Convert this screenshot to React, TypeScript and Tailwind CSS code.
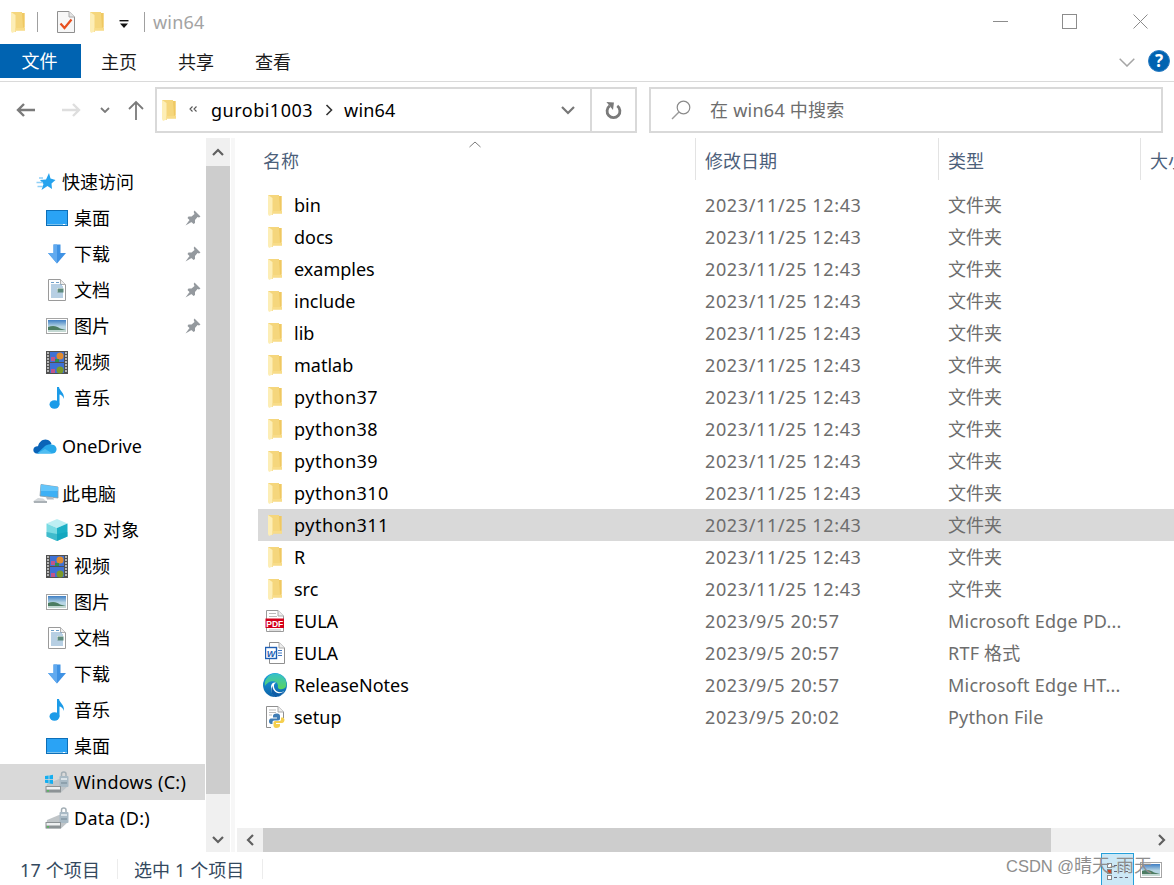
import React from "react";

type IP = { className?: string };

const Folder = ({ className = "" }: IP) => (
  <svg viewBox="0 0 14 21" className={`w-[14px] h-[21px] shrink-0 ${className}`}>
    <path d="M0 0 H11 V1 H13.5 V17 H14 V18.5 H5 V20 L0 19 Z" fill="#f5d67c" />
    <path d="M11 1 H13.5 V15.5 H12 Z" fill="#efc862" />
    <path d="M0 0 L4.5 3 V19.5 L1 21 L0 19 Z" fill="#fdeeb6" />
    <path d="M4.5 16 H14 V18.5 H4.5 Z" fill="#f8dc88" />
  </svg>
);

const Desktop = () => (
  <svg viewBox="0 0 22 16" className="w-[22px] h-[16px] shrink-0">
    <rect x="0" y="0" width="22" height="16" fill="#0d6fb8" />
    <rect x="1" y="1" width="20" height="13" fill="#2aa3f5" />
    <rect x="1" y="14" width="20" height="1" fill="#7cc4ef" />
    <rect x="17" y="14" width="2" height="1" fill="#fff" />
  </svg>
);

const Download = () => (
  <svg viewBox="0 0 20 20" className="w-[20px] h-[20px] shrink-0">
    <path d="M6.5 0.5 H13.5 V9 H19 L10 19.5 L1 9 H6.5 Z" fill="#3f92e4" />
    <path d="M6.5 0.5 H10 V19.5 L1 9 H6.5 Z" fill="#62aaef" />
  </svg>
);

const Doc = () => (
  <svg viewBox="0 0 18 22" className="w-[18px] h-[22px] shrink-0">
    <path d="M0.5 0.5 H12.5 L17.5 5.5 V21.5 H0.5 Z" fill="#fff" stroke="#9a9a9a" />
    <path d="M12.5 0.5 V5.5 H17.5" fill="#eee" stroke="#b0b0b0" />
    <path d="M3 3.5 H6 M8 3.5 H11 M3 6 H14 M3 8 H15 M3 10 H9 M3 12 H9 M3 14 H15 M3 16 H15 M3 18 H15" stroke="#6f9fc8" strokeWidth="1" />
    <rect x="9.5" y="9.5" width="6" height="4" fill="#5d8a7d" />
  </svg>
);

const Picture = () => (
  <svg viewBox="0 0 22 16" className="w-[22px] h-[16px] shrink-0">
    <rect x="0.5" y="0.5" width="21" height="15" fill="#fff" stroke="#a5a5a5" />
    <defs>
      <linearGradient id="sky" x1="0" y1="0" x2="0" y2="1">
        <stop offset="0" stopColor="#3f7fc4" />
        <stop offset="0.55" stopColor="#b8d6e4" />
      </linearGradient>
    </defs>
    <rect x="2" y="2" width="18" height="12" fill="url(#sky)" />
    <path d="M2 9 C7 7 11 8 14 10.5 L20 12 V14 H2 Z" fill="#4d7d62" />
    <path d="M2 12 H20 V14 H2 Z" fill="#c3d8d2" />
  </svg>
);

const Video = () => (
  <svg viewBox="0 0 22 23" className="w-[22px] h-[23px] shrink-0">
    <rect width="22" height="23" fill="#505050" />
    <path d="M1 2 H3 M1 5 H3 M1 8 H3 M1 11 H3 M1 14 H3 M1 17 H3 M1 20 H3 M19 2 H21 M19 5 H21 M19 8 H21 M19 11 H21 M19 14 H21 M19 17 H21 M19 20 H21" stroke="#d8d8d8" strokeWidth="1.5" />
    <rect x="4" y="1" width="14" height="10" fill="#3f71d4" />
    <rect x="4" y="12" width="14" height="10" fill="#3f71d4" />
    <circle cx="14" cy="5" r="3.5" fill="#e08a2e" />
    <rect x="5" y="6" width="4" height="4" fill="#c0558a" />
    <circle cx="14" cy="19" r="3.5" fill="#7b9a2a" />
    <rect x="9" y="8" width="4" height="3" fill="#2f8f4e" />
    <rect x="5" y="18" width="4" height="4" fill="#c0558a" />
  </svg>
);

const Music = () => (
  <svg viewBox="0 0 16 22" className="w-[16px] h-[22px] shrink-0">
    <ellipse cx="5.5" cy="17.5" rx="5" ry="4.2" fill="#1b9be8" />
    <path d="M8 0 H10 C10.5 4 15.5 5 15 12 C14 9 12 7.5 10.5 7.5 V17.5 H8 Z" fill="#1b9be8" />
  </svg>
);

const Cloud = () => (
  <svg viewBox="0 0 24 16" className="w-[24px] h-[16px] shrink-0 ml-[-2px]">
    <path d="M4 15.5 C1 15.5 0 13 0.5 11 C1 9 3 8 5 8.3 C6 3 11 0 15 2 C17 3 18 4 18.5 6 L10 11 L6 15.5 Z" fill="#0a64b8" />
    <path d="M4 15.5 L11 9 C13 7 16 6 18.5 6.5 C22 6.5 24 9.5 23.5 12 C23 14.5 21.5 15.5 19.5 15.5 Z" fill="#28a8ea" />
    <path d="M4 15.5 H19.5 L12 11 Z" fill="#50bdf2" />
  </svg>
);

const PC = () => (
  <svg viewBox="0 0 26 20" className="w-[26px] h-[20px] shrink-0">
    <path d="M8 0.5 L25 3 V14 L7 12 Z" fill="#3db0f5" stroke="#8a9aa5" strokeWidth="0.8" />
    <path d="M8 0.5 L25 3 V7 L7.5 7 Z" fill="#64c5fa" />
    <path d="M13 13 H20 L21 15.5 H14 Z" fill="#b5bcc2" />
    <path d="M5 14 L10 14.5 L13 17 L0.5 17 Z" fill="#d3d7da" />
    <path d="M0.5 17 H14 L14 19 H1 Z" fill="#aab1b6" />
  </svg>
);

const Cube = () => (
  <svg viewBox="0 0 22 22" className="w-[22px] h-[22px] shrink-0">
    <path d="M11 0 L21.5 4.5 L11 9 L0.5 4.5 Z" fill="#bdeff3" />
    <path d="M0.5 4.5 L11 9 V22 L0.5 17.5 Z" fill="#7adbe3" />
    <path d="M11 9 L21.5 4.5 V17.5 L11 22 Z" fill="#1bb0c6" />
    <path d="M0.5 13 L11 15 L21.5 13 V17.5 L11 22 L0.5 17.5 Z" fill="#0fa0ba" opacity="0.55" />
  </svg>
);

const Drive = ({ win }: { win?: boolean }) => (
  <svg viewBox="0 0 24 22" className="w-[24px] h-[22px] shrink-0">
    <path d="M16.5 5 V3 C16.5 0.3 21 0.3 21 3 V5" fill="none" stroke="#a3aeb5" strokeWidth="1.5" />
    <path d="M2 13 L14 8 H23 V15 L16 21.5 H1 Z" fill="#c0c5c8" />
    <rect x="14.5" y="5" width="9" height="11" rx="1" fill="#a9bac5" />
    <rect x="16" y="7" width="6" height="2" fill="#dbe3e8" />
    <rect x="16" y="11" width="6" height="2" fill="#8ea1ad" />
    <path d="M0.5 15 H16 V21.5 H0.5 Z" fill="#8c9295" />
    <rect x="1.5" y="16" width="13.5" height="2.5" fill="#eef0f1" />
    <rect x="2" y="19.3" width="2" height="1.2" fill="#45c44b" />
    {win && (
      <g fill="#14aef0">
        <path d="M0 5 L3.6 4.5 V8 H0 Z" />
        <path d="M4.4 4.4 L8 3.8 V8 H4.4 Z" />
        <path d="M0 8.8 H3.6 V12.3 L0 11.8 Z" />
        <path d="M4.4 8.8 H8 V13 L4.4 12.4 Z" />
      </g>
    )}
  </svg>
);

const Star = () => (
  <svg viewBox="0 0 20 20" className="w-[20px] h-[20px] shrink-0">
    <path d="M13 1 L14.5 6.5 L19.5 8 L15.5 11.5 L16 17 L11.5 14 L5.5 18 L7.5 12 L4 8 L10 7.5 Z" fill="#25a3ee" />
    <path d="M3 6 H7 M0.5 10.5 H7 M1.5 14.5 H7" stroke="#8fd0f7" strokeWidth="1.4" />
  </svg>
);

const Pin = () => (
  <svg viewBox="0 0 16 16" className="w-[16px] h-[16px] shrink-0">
    <path d="M9.5 0.5 L15.5 6.5 L14 7.5 L12.5 7 L10 10 L10 13 L8.5 14 L2.5 8 L3.5 6.5 L6.5 6.5 L9.5 4 L8.7 2 Z M4.5 10 L6.5 12 L0.5 15.5 Z" fill="#94999e" />
  </svg>
);

const Pdf = () => (
  <svg viewBox="0 0 20 22" className="w-[20px] h-[22px] shrink-0">
    <path d="M1.5 0.5 H13 L18.5 6 V21.5 H1.5 Z" fill="#fff" stroke="#9a9a9a" />
    <path d="M13 0.5 V6 H18.5" fill="#eee" stroke="#aaa" />
    <path d="M4 3.5 H11 M4 6.5 H12 M4 20 H16" stroke="#bbb" />
    <rect x="0.5" y="8.5" width="18.5" height="9.5" fill="#d4001a" />
    <text x="9.8" y="16.6" fontSize="8.5" fontWeight="700" fill="#fff" textAnchor="middle" fontFamily="Liberation Sans, sans-serif">PDF</text>
  </svg>
);

const Word = () => (
  <svg viewBox="0 0 20 22" className="w-[20px] h-[22px] shrink-0">
    <path d="M4.5 0.5 H14 L19.5 6 V21.5 H4.5 Z" fill="#fff" stroke="#8f8f8f" />
    <path d="M14 0.5 V6 H19.5" fill="#eee" stroke="#aaa" />
    <path d="M13 8.5 H17 M13 11 H17 M13 13.5 H17" stroke="#3f77c0" />
    <rect x="0.5" y="5.5" width="11" height="11" fill="#fff" stroke="#1f5fb4" strokeWidth="1.4" />
    <text x="6" y="14.6" fontSize="9" fontWeight="700" fontStyle="italic" fill="#1f5fb4" textAnchor="middle" fontFamily="Liberation Sans, sans-serif">W</text>
  </svg>
);

const Edge = () => (
  <svg viewBox="0 0 24 24" className="w-[24px] h-[24px] shrink-0">
    <defs>
      <linearGradient id="eg" x1="0.8" y1="0" x2="0.8" y2="1">
        <stop offset="0" stopColor="#35c1c9" />
        <stop offset="1" stopColor="#5ad45d" />
      </linearGradient>
      <linearGradient id="eb" x1="0" y1="0" x2="0" y2="1">
        <stop offset="0" stopColor="#1a9fe0" />
        <stop offset="1" stopColor="#0c62a8" />
      </linearGradient>
    </defs>
    <circle cx="12" cy="12" r="12" fill="url(#eb)" />
    <path d="M4 5 C7 0 17 -2 22 6 C24 10 24 14 21 15.5 C18 17 14 16 15 13 C15 9 11 7.5 7.5 8.5 C5 9.5 3 11 2 13 C1.5 10 2 7 4 5 Z" fill="url(#eg)" />
    <path d="M8 14 C8 10.5 11 9 13 9.8 C10.5 10.5 10.5 14 12 16.5 C14 19.5 18 20 21 18 C19 22 15 24 12 24 C9 22 8 18 8 14 Z" fill="#fff" />
    <path d="M9.5 13 C9.5 16.5 12 20 16 20.2 C18 20.3 20 19.3 21.5 17.5 C19.5 22 15.5 24 12 24 C8 22.5 7.5 16 9.5 13 Z" fill="#0e5da6" />
  </svg>
);

const Py = () => (
  <svg viewBox="0 0 20 22" className="w-[20px] h-[22px] shrink-0">
    <path d="M1.5 21.5 V0.5 H13 L18.5 6 V12" fill="#fff" stroke="#8f8f8f" />
    <path d="M1.5 21.5 H6" fill="none" stroke="#8f8f8f" />
    <path d="M13 0.5 V6 H18.5" fill="#eee" stroke="#aaa" />
    <path d="M4 4 H11 M4 6.5 H11 M4 9 H7" stroke="#bbb" />
    <path d="M12 7.5 C9 7.5 8 8.5 8 10 V11.5 H12 V12.5 H6 C4.5 12.5 4 14 4 15.5 C4 17 5 18 6 18 H7.5 V16 C7.5 15 8.5 14.5 9.5 14.5 H13 C14.5 14.5 15 13.5 15 12.5 V10 C15 8.5 14 7.5 12 7.5 Z" fill="#3f7cb4" />
    <path d="M11 22 C14 22 15 21 15 19.5 V18 H11 V17 H17 C18.5 17 19.5 15.5 19.5 14 C19.5 12.5 18.5 11.5 17.5 11.5 H16 V13.5 C16 14.5 15 15 14 15 H10.5 C9 15 8.5 16 8.5 17 V19.5 C8.5 21 9.5 22 11 22 Z" fill="#f5cf4e" />
  </svg>
);

const nav1: [React.ReactNode, string, boolean][] = [
  [<Desktop />, "桌面", true],
  [<Download />, "下载", true],
  [<Doc />, "文档", true],
  [<Picture />, "图片", true],
  [<Video />, "视频", false],
  [<Music />, "音乐", false],
];

const nav2: [React.ReactNode, string][] = [
  [<Cube />, "3D 对象"],
  [<Video />, "视频"],
  [<Picture />, "图片"],
  [<Doc />, "文档"],
  [<Download />, "下载"],
  [<Music />, "音乐"],
  [<Desktop />, "桌面"],
];

const folders = ["bin", "docs", "examples", "include", "lib", "matlab", "python37", "python38", "python39", "python310", "python311", "R", "src"];
const files: [React.ReactNode, string, string, string][] = [
  [<Pdf />, "EULA", "2023/9/5 20:57", "Microsoft Edge PD..."],
  [<Word />, "EULA", "2023/9/5 20:57", "RTF 格式"],
  [<Edge />, "ReleaseNotes", "2023/9/5 20:57", "Microsoft Edge HT..."],
  [<Py />, "setup", "2023/9/5 20:02", "Python File"],
];

const NavRow = ({ icon, label, pin, selected, wide }: { icon: React.ReactNode; label: string; pin?: boolean; selected?: boolean; wide?: boolean }) => (
  <div className={`h-[36px] flex items-center ${selected ? "bg-[#d9d9d9]" : ""}`}>
    <div className="w-[74px] pl-[46px] pr-[6px] flex justify-center shrink-0 h-[24px] items-center">{icon}</div>
    <span className={`flex-1 text-black whitespace-nowrap ${wide ? "tracking-[0.3px]" : ""}`}>{label}</span>
    {pin && <div className="mr-[4px] mt-[-1px]"><Pin /></div>}
  </div>
);

const NavHead = ({ icon, label }: { icon: React.ReactNode; label: string }) => (
  <div className="h-[36px] flex items-center">
    <div className="w-[62px] pl-[32px] pr-[2px] flex justify-center shrink-0">{icon}</div>
    <span className="text-black whitespace-nowrap">{label}</span>
  </div>
);

const FileRow = ({ icon, name, date, type, selected, digits, latin }: { icon: React.ReactNode; name: string; date: string; type: string; selected?: boolean; digits?: boolean; latin?: boolean }) => (
  <div className={`h-[32px] flex items-center whitespace-nowrap ${selected ? "bg-[#d9d9d9]" : ""}`}>
    <div className="w-[36px] flex justify-center pr-[2px] shrink-0">{icon}</div>
    <span className={`w-[411px] text-black shrink-0 ${digits ? "tracking-[0.5px]" : ""}`}>{name}</span>
    <span className="w-[243px] text-[#6d6d6d] shrink-0 tracking-[0.63px]">{date}</span>
    <span className={`text-[#6d6d6d] ${latin ? "tracking-[0.22px]" : ""}`}>{type}</span>
  </div>
);

export default function App() {
  return (
    <div className="relative w-[1174px] h-[885px] overflow-hidden bg-white flex flex-col text-[18px] leading-[24px] font-['Noto_Sans','Noto_Sans_CJK_SC',sans-serif]">
      {/* title bar */}
      <div className="h-[44px] flex items-center shrink-0">
        <div className="ml-[11px]"><Folder /></div>
        <div className="ml-[12px] w-px h-[20px] bg-[#a0a0a0]" />
        <svg viewBox="0 0 18 22" className="ml-[19px] w-[18px] h-[22px] shrink-0">
          <path d="M0.5 0.5 H12 L17.5 6 V21.5 H0.5 Z" fill="#f7f7f7" stroke="#8f8f8f" />
          <path d="M12 0.5 V6 H17.5" fill="#e5e5e5" stroke="#aaa" />
          <path d="M3.5 12.5 L7.5 17 L14.5 8.5" fill="none" stroke="#e8501f" strokeWidth="2.2" />
        </svg>
        <div className="ml-[15px]"><Folder /></div>
        <svg viewBox="0 0 10 9" className="ml-[15px] mt-[5px] w-[10px] h-[9px] shrink-0">
          <rect x="0.5" y="0" width="9" height="1.4" fill="#111" />
          <path d="M1 3.5 H9 L5 8 Z" fill="#111" />
        </svg>
        <div className="ml-[15px] w-px h-[20px] bg-[#a0a0a0]" />
        <span className="ml-[8px] text-[#a3a3a3] mt-[-1px] tracking-[0.2px]">win64</span>
        <div className="ml-auto flex items-center mb-[2px]">
          <div className="w-[15px] h-px bg-[#8c8c8c]" />
          <div className="ml-[54px] w-[15px] h-[15px] border border-[#8c8c8c]" />
          <svg viewBox="0 0 15 15" className="ml-[56px] mr-[26px] w-[15px] h-[15px] shrink-0">
            <path d="M0.5 0.5 L14.5 14.5 M14.5 0.5 L0.5 14.5" stroke="#8c8c8c" strokeWidth="1" />
          </svg>
        </div>
      </div>

      {/* ribbon */}
      <div className="h-[38px] flex shrink-0 border-b border-[#dadada] relative">
        <div className="w-[81px] h-[34px] pr-[2px] bg-[#0063b1] text-white flex items-center justify-center">文件</div>
        <div className="h-[34px] pt-[1px] flex items-center ml-[20px] gap-[41px] text-[#1a1a1a]">
          <span>主页</span>
          <span>共享</span>
          <span>查看</span>
        </div>
        <div className="ml-auto h-[34px] flex items-center">
          <svg viewBox="0 0 16 9" className="w-[16px] h-[9px] mt-[2px] shrink-0">
            <path d="M0.7 0.7 L8 8 L15.3 0.7" fill="none" stroke="#a5a5a5" strokeWidth="1.5" />
          </svg>
          <div className="ml-[13px] mr-[4px] w-[22px] h-[22px] rounded-full bg-[#0063b1] border border-[#2f7fc4] text-white text-[17px] font-bold flex items-center justify-center">?</div>
        </div>
      </div>

      {/* address row */}
      <div className="h-[56px] flex items-start pt-[5px] shrink-0">
        <div className="w-[155px] h-[46px] flex items-center shrink-0">
          <svg viewBox="0 0 20 16" className="ml-[16px] w-[20px] h-[16px] shrink-0">
            <path d="M19 8 H2 M8 2 L2 8 L8 14" fill="none" stroke="#7a7a7a" strokeWidth="2.4" />
          </svg>
          <svg viewBox="0 0 20 16" className="ml-[25px] w-[20px] h-[16px] shrink-0">
            <path d="M1 8 H18 M12 2 L18 8 L12 14" fill="none" stroke="#dedede" strokeWidth="2.4" />
          </svg>
          <svg viewBox="0 0 10 6" className="ml-[19px] w-[10px] h-[6px] shrink-0">
            <path d="M1 1 L5 5 L9 1" fill="none" stroke="#7a7a7a" strokeWidth="1.8" />
          </svg>
          <svg viewBox="0 0 16 20" className="ml-[18px] w-[16px] h-[20px] shrink-0">
            <path d="M8 20 V2 M1 9 L8 2 L15 9" fill="none" stroke="#7a7a7a" strokeWidth="1.8" />
          </svg>
        </div>
        <div className="w-[482px] h-[46px] border-2 border-[#d9d9d9] flex items-center shrink-0">
          <div className="ml-[5px]"><Folder /></div>
          <svg viewBox="0 0 8 6" className="ml-[13px] w-[8px] h-[6px] mt-[-3px] shrink-0">
            <path d="M3.5 0.5 L1 3 L3.5 5.5 M7.5 0.5 L5 3 L7.5 5.5" fill="none" stroke="#555" strokeWidth="1.1" />
          </svg>
          <span className="ml-[14px] text-black tracking-[0.5px]">gurobi1003</span>
          <svg viewBox="0 0 8 12" className="ml-[12px] w-[8px] h-[12px] shrink-0">
            <path d="M1.5 1 L6.5 6 L1.5 11" fill="none" stroke="#333" strokeWidth="1.6" />
          </svg>
          <span className="ml-[11px] text-black tracking-[0.2px]">win64</span>
          <svg viewBox="0 0 14 9" className="ml-auto mr-[15px] w-[14px] h-[9px] shrink-0">
            <path d="M1 1 L7 7 L13 1" fill="none" stroke="#777" strokeWidth="2.2" />
          </svg>
          <div className="w-[45px] h-full border-l-2 border-[#d9d9d9] flex items-center justify-center">
            <svg viewBox="0 0 18 18" className="w-[17px] h-[17px] shrink-0">
              <path d="M13 4.2 A6.8 6.8 0 1 1 5 4.2" fill="none" stroke="#7a7a7a" strokeWidth="3" />
              <path d="M1.5 0 L9.5 0.5 L8.5 8.5 Z" fill="#7a7a7a" />
            </svg>
          </div>
        </div>
        <div className="ml-[12px] w-[514px] h-[46px] border-2 border-[#d9d9d9] flex items-center shrink-0">
          <svg viewBox="0 0 20 20" className="ml-[20px] w-[20px] h-[20px] shrink-0">
            <circle cx="12.5" cy="7.5" r="6.3" fill="none" stroke="#8a8a8a" strokeWidth="1.2" />
            <path d="M8 12 L1 19" stroke="#9a9a9a" strokeWidth="1.5" />
          </svg>
          <span className="ml-[19px] text-[#6d6d6d] tracking-[0.25px]">在 win64 中搜索</span>
        </div>
      </div>

      {/* main */}
      <div className="flex-1 flex min-h-0 relative">
        {/* nav */}
        <div className="w-[205px] pt-[26px] shrink-0 overflow-hidden">
          <NavHead icon={<Star />} label="快速访问" />
          {nav1.map(([ic, l, p], i) => (
            <NavRow key={i} icon={ic} label={l} pin={p} />
          ))}
          <div className="h-[12px]" />
          <NavHead icon={<Cloud />} label="OneDrive" />
          <div className="h-[12px]" />
          <NavHead icon={<PC />} label="此电脑" />
          {nav2.map(([ic, l], i) => (
            <NavRow key={i} icon={ic} label={l} wide={i === 0} />
          ))}
          <NavRow icon={<Drive win />} label="Windows (C:)" selected wide />
          <NavRow icon={<Drive />} label="Data (D:)" wide />
        </div>

        {/* nav scrollbar */}
        <div className="ml-px w-[24px] bg-[#f0f0f0] flex flex-col shrink-0">
          <div className="h-[28px] flex items-center justify-center">
            <svg viewBox="0 0 12 8" className="w-[12px] h-[8px]"><path d="M1 7 L6 2 L11 7" fill="none" stroke="#606060" strokeWidth="2.2" /></svg>
          </div>
          <div className="h-[628px] bg-[#cdcdcd]" />
          <div className="flex-1 flex items-end justify-center pb-[6px]">
            <svg viewBox="0 0 12 8" className="w-[12px] h-[8px] mb-[2px]"><path d="M1 1 L6 6 L11 1" fill="none" stroke="#606060" strokeWidth="2.2" /></svg>
          </div>
        </div>
        <div className="ml-px w-[4px] bg-[#f7f7f7] shrink-0" />
        <div className="w-[2px] shrink-0" />

        {/* content */}
        <div className="flex-1 flex flex-col min-w-0 relative">
          <div className="flex-1 min-h-0 overflow-hidden">
            <div className="relative h-[42px] flex text-[#4c607a] whitespace-nowrap">
              <svg viewBox="0 0 12 7" className="absolute left-[232px] top-[3px] w-[12px] h-[7px]">
                <path d="M0.5 6 L6 1 L11.5 6" fill="none" stroke="#7a7a7a" strokeWidth="1" />
              </svg>
              <div className="w-[459px] pl-[26px] pt-[11px] border-r border-[#e3e3e3] h-[42px] shrink-0">名称</div>
              <div className="w-[243px] pl-[9px] pt-[11px] border-r border-[#e3e3e3] h-[42px] shrink-0">修改日期</div>
              <div className="w-[202px] pl-[9px] pt-[11px] border-r border-[#e3e3e3] h-[42px] shrink-0">类型</div>
              <div className="pl-[9px] pt-[11px]">大小</div>
            </div>
            <div className="mt-[9px] ml-[21px]">
              {folders.map((f) => (
                <FileRow key={f} icon={<Folder />} name={f} date="2023/11/25 12:43" type="文件夹" selected={f === "python311"} digits={f.startsWith("python")} />
              ))}
              {files.map(([ic, n, d, t], i) => (
                <FileRow key={i} icon={ic} name={n} date={d} type={t} latin />
              ))}
            </div>
          </div>
          {/* horizontal scrollbar */}
          <div className="h-[24px] bg-[#f0f0f0] flex items-center shrink-0">
            <div className="w-[26px] flex justify-center">
              <svg viewBox="0 0 8 12" className="w-[8px] h-[12px]"><path d="M7 1 L2 6 L7 11" fill="none" stroke="#606060" strokeWidth="2.2" /></svg>
            </div>
            <div className="w-[788px] h-full bg-[#cdcdcd]" />
            <div className="flex-1 flex justify-end pr-[8px]">
              <svg viewBox="0 0 8 12" className="w-[8px] h-[12px]"><path d="M1 1 L6 6 L1 11" fill="none" stroke="#606060" strokeWidth="2.2" /></svg>
            </div>
          </div>
        </div>
      </div>

      {/* status bar */}
      <div className="h-[33px] flex items-center shrink-0 text-[#34495e] whitespace-nowrap relative">
        <span className="ml-[20px] w-[97px] mt-[2px] tracking-[0.15px]">17 个项目</span>
        <div className="w-px h-[20px] bg-[#ececec]" />
        <span className="ml-[16px] w-[128px] mt-[2px] tracking-[0.1px]">选中 1 个项目</span>
        <div className="w-px h-[20px] bg-[#ececec]" />
        <div className="ml-auto mr-[40px] w-[33px] h-[33px] mt-[1px] bg-[#cce8f6] border border-[#26a0da] flex flex-col items-center justify-end gap-[1px] pb-[5px]">
          <div className="flex gap-[2px] items-center"><div className="w-[5px] h-[5px] border border-[#888] bg-white" /><div className="w-[14px] border-t border-dashed border-[#667]" /></div>
          <div className="flex gap-[2px] items-center"><div className="w-[5px] h-[5px] border border-[#888] bg-[#c8492b]" /><div className="w-[14px] border-t border-dashed border-[#667]" /></div>
          <div className="flex gap-[2px] items-center"><div className="w-[5px] h-[5px] border border-[#888] bg-white" /><div className="w-[14px] border-t border-dashed border-[#667]" /></div>
        </div>
        <div className="absolute right-[12px] top-[10px]"><Picture /></div>
      </div>

      {/* watermark */}
      <div className="absolute left-[1006px] top-[854px] text-[#8e8e8e] text-[16.5px] whitespace-nowrap font-['Liberation_Sans','Noto_Sans_CJK_SC',sans-serif]">CSDN @<span className="text-[18px]">晴天-雨天</span></div>
    </div>
  );
}
